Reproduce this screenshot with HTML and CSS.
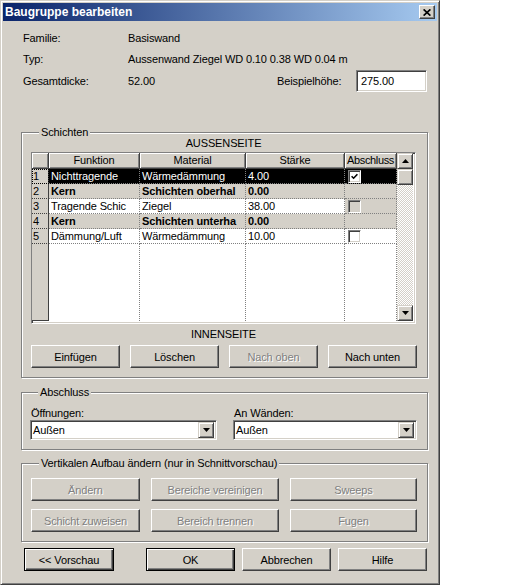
FILE: index.html
```html
<!DOCTYPE html>
<html lang="de">
<head>
<meta charset="utf-8">
<title>Baugruppe bearbeiten</title>
<link rel="stylesheet" href="styles.css">
</head>
<body>
<div class="window">
  <div class="titlebar">
    <span class="title">Baugruppe bearbeiten</span>
    <span class="close"><svg width="8" height="7" viewBox="0 0 8 7"><path d="M0.6 0.4L7.4 6.6M7.4 0.4L0.6 6.6" stroke="#000" stroke-width="1.7"/></svg></span>
  </div>

  <div class="info">
    <div class="info-row"><span class="lbl">Familie:</span><span>Basiswand</span></div>
    <div class="info-row"><span class="lbl">Typ:</span><span>Aussenwand Ziegel WD 0.10 0.38 WD 0.04 m</span></div>
    <div class="info-row tall"><span class="lbl">Gesamtdicke:</span><span class="val">52.00</span><span class="lbl2">Beispielhöhe:</span><span class="field input">275.00</span></div>
  </div>

  <div class="group schichten">
    <div class="legend">Schichten</div>
    <div class="side top">AUSSENSEITE</div>
    <div class="grid field">
      <div class="rows">
        <div class="h"></div><div class="h">Funktion</div><div class="h">Material</div><div class="h">Stärke</div><div class="h narrow">Abschluss</div>

        <div class="n focus">1</div><div class="c sel">Nichttragende</div><div class="c sel">Wärmedämmung</div><div class="c sel">4.00</div><div class="c sel cbc"><span class="cb"><svg width="7" height="7" viewBox="0 0 7 7"><path d="M0.6 3.2L2.6 5.2L6.4 1.2" fill="none" stroke="#000" stroke-width="1.6"/></svg></span></div>

        <div class="n">2</div><div class="c k">Kern</div><div class="c k">Schichten oberhal</div><div class="c k">0.00</div><div class="c k"></div>

        <div class="n">3</div><div class="c">Tragende Schic</div><div class="c">Ziegel</div><div class="c">38.00</div><div class="c gray cbc"><span class="cb dis"></span></div>

        <div class="n">4</div><div class="c k">Kern</div><div class="c k">Schichten unterha</div><div class="c k">0.00</div><div class="c k"></div>

        <div class="n">5</div><div class="c">Dämmung/Luft</div><div class="c">Wärmedämmung</div><div class="c">10.00</div><div class="c cbc"><span class="cb"></span></div>

        <div class="n f"></div><div class="c f"></div><div class="c f"></div><div class="c f"></div><div class="c f"></div>
      </div>
      <div class="scrollbar">
        <div class="sbtn"><svg width="7" height="4" viewBox="0 0 7 4"><path d="M3.5 0L7 4H0z"/></svg></div>
        <div class="thumb"></div>
        <div class="track"></div>
        <div class="sbtn"><svg width="7" height="4" viewBox="0 0 7 4"><path d="M0 0H7L3.5 4z"/></svg></div>
      </div>
    </div>
    <div class="side bottom">INNENSEITE</div>
    <div class="btnrow">
      <div class="btn">Einfügen</div>
      <div class="btn">Löschen</div>
      <div class="btn disabled">Nach oben</div>
      <div class="btn">Nach unten</div>
    </div>
  </div>

  <div class="group abschluss">
    <div class="legend">Abschluss</div>
    <div class="combos">
      <div class="combo-col">
        <div class="clbl">Öffnungen:</div>
        <div class="combo field"><span class="ctext">Außen</span><span class="sbtn dd"><svg width="7" height="4" viewBox="0 0 7 4"><path d="M0 0H7L3.5 4z"/></svg></span></div>
      </div>
      <div class="combo-col">
        <div class="clbl">An Wänden:</div>
        <div class="combo field"><span class="ctext">Außen</span><span class="sbtn dd"><svg width="7" height="4" viewBox="0 0 7 4"><path d="M0 0H7L3.5 4z"/></svg></span></div>
      </div>
    </div>
  </div>

  <div class="group vertikal">
    <div class="legend">Vertikalen Aufbau ändern (nur in Schnittvorschau)</div>
    <div class="vgrid">
      <div class="btn disabled">Ändern</div>
      <div class="btn disabled">Bereiche vereinigen</div>
      <div class="btn disabled">Sweeps</div>
      <div class="btn disabled">Schicht zuweisen</div>
      <div class="btn disabled">Bereich trennen</div>
      <div class="btn disabled">Fugen</div>
    </div>
  </div>

  <div class="footer">
    <div class="btn default vorschau">&lt;&lt; Vorschau</div>
    <div class="btn default ok">OK</div>
    <div class="btn">Abbrechen</div>
    <div class="btn">Hilfe</div>
  </div>
</div>
</body>
</html>
```

FILE: styles.css
```css
html, body {
  margin: 0;
  padding: 0;
  background: #fff;
}
body {
  font-family: "Liberation Sans", Arial, sans-serif;
  font-size: 11px;
  letter-spacing: -0.12px;
  color: #000;
}
.window {
  width: 440px;
  height: 585px;
  box-sizing: border-box;
  background: #d4d0c8;
  border: 1px solid;
  border-color: #d4d0c8 #404040 #404040 #d4d0c8;
  box-shadow: inset 1px 1px #fff, inset -1px -1px #808080;
  padding: 2px;
  display: flex;
  flex-direction: column;
}
.titlebar {
  height: 18px;
  flex: none;
  display: flex;
  align-items: center;
  justify-content: space-between;
  padding: 0 2px;
  background: linear-gradient(to right, #0a246a, #a6caf0);
  color: #fff;
  font-weight: bold;
  font-size: 12px;
  letter-spacing: 0;
}
.close {
  width: 16px;
  height: 14px;
  box-sizing: border-box;
  background: #d4d0c8;
  border: 1px solid;
  border-color: #fff #404040 #404040 #fff;
  box-shadow: inset -1px -1px #808080;
  display: flex;
  align-items: center;
  justify-content: center;
}
.close svg { display: block; }

.field {
  box-sizing: border-box;
  border: 1px solid;
  border-color: #808080 #fff #fff #808080;
  box-shadow: inset 1px 1px #404040, inset -1px -1px #d4d0c8;
  background: #fff;
}

/* info */
.info {
  margin: 6px 0 0 20px;
}
.info-row {
  display: flex;
  align-items: center;
  height: 21px;
}
.info-row.tall { height: 23px; }
.lbl { width: 105px; flex: none; }
.val { width: 149px; flex: none; }
.lbl2 { width: 79px; flex: none; }
.input {
  width: 71px;
  height: 22px;
  padding: 2px 0 0 4px;
  line-height: 16px;
}

/* groups */
.group {
  margin-left: 18px;
  width: 407px;
  box-sizing: border-box;
  border: 1px solid #808080;
  box-shadow: inset 1px 1px #fff, 1px 1px #fff;
}
.legend {
  width: fit-content;
  margin: -7px 0 0 8px;
  padding: 0 2px;
  height: 13px;
  line-height: 13px;
  background: #d4d0c8;
}
.schichten {
  margin-top: 40px;
  padding: 0 10px 9px 9px;
}
.side {
  width: 385px;
  text-align: center;
}
.side.top { line-height: 9px; margin-bottom: 4px; }
.side.bottom { line-height: 21px; }

.grid {
  width: 385px;
  height: 172px;
  display: flex;
}
.rows {
  width: 365px;
  height: 168px;
  display: grid;
  grid-template-columns: 17px 91px 106px 99px 52px;
  grid-template-rows: 16px repeat(5, 15px) 1fr;
}
.rows > div {
  box-sizing: border-box;
  white-space: nowrap;
  overflow: hidden;
}
.h {
  background: #d4d0c8;
  text-align: center;
  line-height: 15px;
  border-right: 1px solid #404040;
  border-bottom: 1px solid #404040;
  box-shadow: inset 1px 1px #fff, inset -1px -1px #808080;
}
.h.narrow { letter-spacing: -0.35px; }
.n {
  background: #d4d0c8;
  border-right: 1px solid #404040;
  border-bottom: 1px dotted #404040;
  padding-left: 1px;
  line-height: 14px;
}
.n.focus {
  outline: 1px dotted #000;
  outline-offset: -1px;
}
.n.f { border-bottom: 1px solid #404040; }
.c {
  background: #fff;
  border-right: 1px dotted #808080;
  border-bottom: 1px dotted #808080;
  padding-left: 2px;
  line-height: 14px;
}
.c.f { border-bottom: none; }
.c.sel { background: #000; color: #fff; }
.c.k { background: #d4d0c8; font-weight: bold; }
.c.gray { background: #d4d0c8; }
.c.cbc {
  display: flex;
  align-items: center;
  padding-left: 3px;
}
.cb {
  width: 13px;
  height: 13px;
  box-sizing: border-box;
  border: 1px solid;
  border-color: #808080 #fff #fff #808080;
  box-shadow: inset 1px 1px #404040, inset -1px -1px #d4d0c8;
  background: #fff;
  display: flex;
  align-items: center;
  justify-content: center;
}
.cb.dis { background: #d4d0c8; }
.cb svg { display: block; }

.scrollbar {
  width: 16px;
  height: 168px;
  display: flex;
  flex-direction: column;
}
.sbtn {
  width: 16px;
  height: 16px;
  flex: none;
  box-sizing: border-box;
  background: #d4d0c8;
  border: 1px solid;
  border-color: #d4d0c8 #404040 #404040 #d4d0c8;
  box-shadow: inset 1px 1px #fff, inset -1px -1px #808080;
  display: flex;
  align-items: center;
  justify-content: center;
}
.sbtn svg { display: block; }
.thumb {
  height: 16px;
  flex: none;
  box-sizing: border-box;
  background: #d4d0c8;
  border: 1px solid;
  border-color: #d4d0c8 #404040 #404040 #d4d0c8;
  box-shadow: inset 1px 1px #fff, inset -1px -1px #808080;
}
.track {
  flex: 1;
  background-color: #fff;
  background-image: conic-gradient(#d4d0c8 25%, #fff 0 50%, #d4d0c8 0 75%, #fff 0);
  background-size: 2px 2px;
}

/* buttons */
.btn {
  box-sizing: border-box;
  height: 23px;
  background: #d4d0c8;
  border: 1px solid;
  border-color: #fff #404040 #404040 #fff;
  box-shadow: inset -1px -1px #808080;
  display: flex;
  align-items: center;
  justify-content: center;
  white-space: nowrap;
}
.btn.disabled {
  color: #808080;
  text-shadow: 1px 1px 0 #fff;
}
.btn.default {
  border: 1px solid #000;
  box-shadow: inset 1px 1px #fff, inset -1px -1px #404040, inset -2px -2px #808080;
}
.btnrow {
  display: grid;
  grid-template-columns: repeat(4, 89px);
  column-gap: 10px;
}

/* abschluss */
.abschluss {
  margin-top: 14px;
  padding: 0 10px 9px 8px;
}
.combos {
  display: grid;
  grid-template-columns: 187px 184px;
  column-gap: 16px;
}
.clbl {
  padding: 7px 0 0 1px;
  line-height: 14px;
}
.combo {
  height: 20px;
  display: flex;
  align-items: center;
  justify-content: space-between;
  padding: 2px;
}
.ctext { padding-left: 0; line-height: 16px; }

/* vertikal */
.vertikal {
  margin-top: 13px;
  padding: 8px 10px 9px 9px;
}
.vertikal .legend { margin-top: -15px; margin-bottom: 8px; }
.vgrid {
  display: grid;
  grid-template-columns: 109px 128px 127px;
  column-gap: 11px;
  row-gap: 8px;
}

/* footer */
.footer {
  margin: 6px 0 0 21px;
  display: flex;
}
.footer .btn { width: 89px; margin-left: 7px; }
.footer .vorschau { width: 90px; margin-left: 0; }
.footer .ok { margin-left: 32px; }
```
